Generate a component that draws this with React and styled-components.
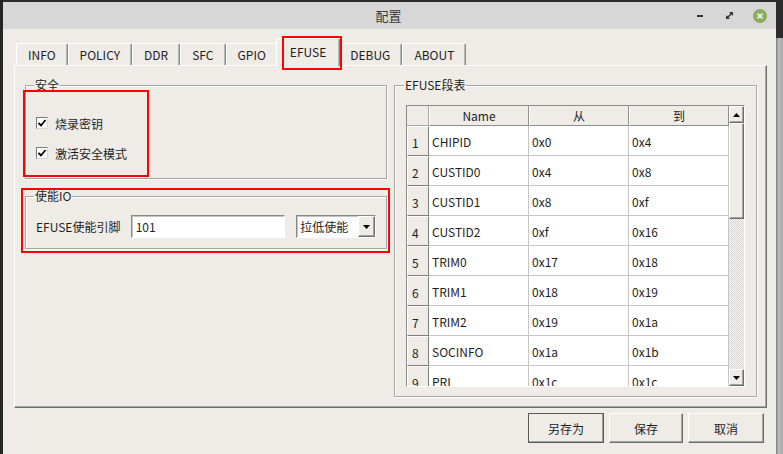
import React from 'react';
import styled, { createGlobalStyle, css } from 'styled-components';

const GlobalStyle = createGlobalStyle`
  html, body { margin: 0; padding: 0; background: #2c2c2c; overflow: hidden; }
  body { font-family: "Noto Sans CJK SC", "Noto Sans", sans-serif; font-size: 12px; color: #1e1e1e; }
  * { box-sizing: border-box; }
`;

const raised = css`
  border: 1px solid;
  border-color: #ffffff #6e6e6e #6e6e6e #ffffff;
  box-shadow: inset -1px -1px 0 #a3a3a3;
`;

const sunken = css`
  border: 1px solid;
  border-color: #8a8a8a #ffffff #ffffff #8a8a8a;
  box-shadow: inset 1px 1px 0 #c4c4c4;
`;

const Screen = styled.div`
  position: relative;
  width: 783px;
  height: 454px;
  display: flex;
  background: #2c2c2c;
`;

const LeftEdge = styled.div`
  width: 3px;
  background: #242424;
`;

const RightEdge = styled.div`
  flex: 1;
  background:
    linear-gradient(to bottom, #2c2c2c 0 38px, transparent 38px),
    linear-gradient(to right, #7d7d7d, #bdbdbd 40%, #a5a5a5);
`;

const Window = styled.div`
  width: 773px;
  margin-top: 2px;
  height: 452px;
  display: flex;
  flex-direction: column;
  background: #efece8;
`;

const TitleBar = styled.div`
  height: 27px;
  background: #d7d7d7;
  display: grid;
  grid-template-columns: 1fr auto 1fr;
  align-items: center;
`;

const Title = styled.div`
  grid-column: 2;
  font-size: 13px;
  color: #3a3a3a;
  padding-right: 2px;
`;

const Controls = styled.div`
  justify-self: end;
  display: flex;
  align-items: center;
  padding-right: 9px;
`;

const CtrlBtn = styled.div`
  width: ${p => p.$w}px;
  height: 14px;
  margin-left: ${p => p.$gap}px;
  display: flex;
  align-items: center;
  justify-content: center;
`;

const Body = styled.div`
  flex: 1;
  display: flex;
  flex-direction: column;
  padding: 0 9px 0 11px;
`;

const TabBar = styled.div`
  display: flex;
  align-items: flex-end;
  height: 27px;
  margin-top: 9px;
  padding-left: 2px;
  position: relative;
  z-index: 1;
`;

const Tab = styled.div`
  height: ${p => (p.$active ? 28 : 22)}px;
  padding: 0 ${p => (p.$active ? 13 : 11)}px;
  margin: 0 ${p => (p.$active ? -2 : 0)}px ${p => (p.$active ? -1 : 0)}px;
  display: flex;
  align-items: center;
  justify-content: center;
  background: #efece8;
  border-top: 1px solid #ffffff;
  border-left: 1px solid #ffffff;
  border-right: 1px solid #8a8a8a;
  border-top-left-radius: 2px;
  border-top-right-radius: 2px;
  box-shadow: inset -1px 0 0 #b8b8b8;
  font-size: 12px;
  color: #1e1e1e;
  position: relative;
  z-index: ${p => (p.$active ? 2 : 1)};
  padding-bottom: ${p => (p.$active ? 3 : 0)}px;
`;

const Pane = styled.div`
  border-top: 1px solid #ffffff;
  border-left: 1px solid #ffffff;
  border-right: 1px solid #6f6f6f;
  border-bottom: 1px solid #6f6f6f;
  box-shadow: inset -1px -1px 0 #a8a8a8;
  display: grid;
  grid-template-columns: 362px 363px;
  column-gap: 7px;
  align-items: start;
  padding: 11px 11px 9px 10px;
  height: 343px;
`;

const Column = styled.div`
  display: flex;
  flex-direction: column;
  gap: 9px;
`;

const Group = styled.fieldset`
  margin: 0;
  min-width: 0;
  border: 1px solid #a6a6a6;
  box-shadow: inset 1px 1px 0 #ffffff, 1px 1px 0 #ffffff;
  padding: ${p => p.$pad};
  display: flex;
  flex-direction: column;
  gap: ${p => p.$gap || 0}px;
`;

const Legend = styled.legend`
  padding: 0 1px;
  margin-left: -2px;
  font-size: 12px;
  line-height: 16px;
  color: #1e1e1e;
`;

const CheckRow = styled.label`
  display: flex;
  align-items: center;
  height: 20px;
  gap: 7px;
  font-size: 12px;
`;

const CheckBox = styled.span`
  width: 12px;
  height: 12px;
  background: #ffffff;
  border: 1px solid;
  border-color: #7a7a7a #d8d8d8 #d8d8d8 #7a7a7a;
  display: flex;
  align-items: center;
  justify-content: center;
`;

const FieldRow = styled.div`
  display: flex;
  align-items: center;
  height: 23px;
`;

const FieldLabel = styled.span`
  width: 95px;
  font-size: 12px;
`;

const TextInput = styled.div`
  ${sunken};
  width: 155px;
  height: 23px;
  background: #ffffff;
  display: flex;
  align-items: center;
  padding-left: 4px;
  font-size: 12px;
`;

const Combo = styled.div`
  ${sunken};
  width: 80px;
  height: 23px;
  margin-left: 11px;
  background: #fbfbfb;
  display: flex;
  align-items: stretch;
  font-size: 12px;
`;

const ComboText = styled.span`
  flex: 1;
  display: flex;
  align-items: center;
  padding-left: 3px;
`;

const ComboButton = styled.span`
  ${raised};
  width: 17px;
  background: #efece8;
  display: flex;
  align-items: center;
  justify-content: center;
`;

const Table = styled.div`
  ${sunken};
  width: 339px;
  height: 282px;
  display: flex;
  background: #ffffff;
`;

const GridArea = styled.div`
  width: 322px;
  height: 280px;
  overflow: hidden;
  display: grid;
  grid-template-columns: 22px 100px 100px 100px;
  grid-template-rows: 20px;
  grid-auto-rows: 30px;
  align-content: start;
`;

const Corner = styled.div`
  background: #efece8;
  border-right: 1px solid #a8a8a8;
  border-bottom: 1px solid #a8a8a8;
`;

const HeadCell = styled.div`
  background: #efece8;
  border-left: 1px solid #ffffff;
  border-right: 1px solid #8e8e8e;
  border-bottom: 1px solid #8e8e8e;
  display: flex;
  align-items: center;
  justify-content: center;
  font-size: 12px;
`;

const RowHead = styled.div`
  background: #efece8;
  border-top: 1px solid #ffffff;
  border-left: 1px solid #ffffff;
  border-right: 1px solid #7e7e7e;
  border-bottom: 1px solid #7e7e7e;
  display: flex;
  align-items: center;
  padding: 3px 0 0 4px;
  font-size: 12px;
`;

const Cell = styled.div`
  background: #ffffff;
  border-right: 1px solid #c6c6c6;
  border-bottom: 1px solid #c6c6c6;
  display: flex;
  align-items: center;
  padding: 1px 0 0 3px;
  font-size: 12px;
`;

const ScrollBar = styled.div`
  width: 15px;
  display: flex;
  flex-direction: column;
  background-color: #f4f2ef;
  background-image: repeating-conic-gradient(#d9d6d2 0 25%, #f7f6f4 0 50%);
  background-size: 2px 2px;
`;

const ScrollBtn = styled.div`
  ${raised};
  height: ${p => p.$h}px;
  background: #efece8;
  display: flex;
  align-items: center;
  justify-content: center;
  margin-top: ${p => (p.$bottom ? 'auto' : '0')};
`;

const Thumb = styled.div`
  ${raised};
  height: 96px;
  background: #efece8;
`;

const ButtonRow = styled.div`
  display: flex;
  justify-content: flex-end;
  gap: 5px;
  padding: 5px 3px 0 0;
`;

const Button = styled.div`
  ${raised};
  width: ${p => p.$w}px;
  height: 30px;
  background: #efece8;
  display: flex;
  align-items: center;
  justify-content: center;
  font-size: 12px;
  ${p => p.$default && css`
    border-color: #ffffff #3e3e3e #3e3e3e #ffffff;
    outline: 1px solid #5a5a5a;
    outline-offset: -1px;
  `}
`;

const Mark = styled.div`
  position: absolute;
  left: ${p => p.$x}px;
  top: ${p => p.$y}px;
  width: ${p => p.$w}px;
  height: ${p => p.$h}px;
  border: 2px solid #ff0000;
  pointer-events: none;
  z-index: 5;
`;

const Check = () => (
  <svg width="10" height="10" viewBox="0 0 10 10">
    <path d="M1.5 5 L4 7.5 L8.5 2" stroke="#000" strokeWidth="1.8" fill="none" />
  </svg>
);

const Down = () => (
  <svg width="7" height="4" viewBox="0 0 7 4"><path d="M0 0h7L3.5 4z" fill="#000" /></svg>
);
const Up = () => (
  <svg width="7" height="4" viewBox="0 0 7 4"><path d="M0 4h7L3.5 0z" fill="#000" /></svg>
);

const tabs = ['INFO', 'POLICY', 'DDR', 'SFC', 'GPIO', 'EFUSE', 'DEBUG', 'ABOUT'];

const rows = [
  ['CHIPID', '0x0', '0x4'],
  ['CUSTID0', '0x4', '0x8'],
  ['CUSTID1', '0x8', '0xf'],
  ['CUSTID2', '0xf', '0x16'],
  ['TRIM0', '0x17', '0x18'],
  ['TRIM1', '0x18', '0x19'],
  ['TRIM2', '0x19', '0x1a'],
  ['SOCINFO', '0x1a', '0x1b'],
  ['PRI', '0x1c', '0x1c'],
];

export default function App() {
  return (
    <>
      <GlobalStyle />
      <Screen>
        <LeftEdge />
        <Window>
          <TitleBar>
            <Title>配置</Title>
            <Controls>
              <CtrlBtn $w={7} $gap={0}>
                <svg width="6" height="2"><rect width="6" height="2" fill="#333" /></svg>
              </CtrlBtn>
              <CtrlBtn $w={7} $gap={23}>
                <svg width="7" height="7" viewBox="0 0 7 7">
                  <path d="M3 0h4v4z M0 3v4h4z" fill="#333" />
                  <path d="M1.5 5.5 L5.5 1.5" stroke="#333" strokeWidth="1.4" />
                </svg>
              </CtrlBtn>
              <CtrlBtn $w={14} $gap={20}>
                <svg width="14" height="14" viewBox="0 0 14 14">
                  <circle cx="7" cy="7" r="7" fill="#8aad62" />
                  <path d="M4.5 4.5 L9.5 9.5 M9.5 4.5 L4.5 9.5" stroke="#fff" strokeWidth="1.6" />
                </svg>
              </CtrlBtn>
            </Controls>
          </TitleBar>
          <Body>
            <TabBar>
              {tabs.map(t => (
                <Tab key={t} $active={t === 'EFUSE'}>{t}</Tab>
              ))}
            </TabBar>
            <Pane>
              <Column>
                <Group $pad="20px 10px 15px" $gap={10}>
                  <Legend>安全</Legend>
                  <CheckRow><CheckBox><Check /></CheckBox>烧录密钥</CheckRow>
                  <CheckRow><CheckBox><Check /></CheckBox>激活安全模式</CheckRow>
                </Group>
                <Group $pad="11px 10px 10px">
                  <Legend>使能IO</Legend>
                  <FieldRow>
                    <FieldLabel>EFUSE使能引脚</FieldLabel>
                    <TextInput>101</TextInput>
                    <Combo>
                      <ComboText>拉低使能</ComboText>
                      <ComboButton><Down /></ComboButton>
                    </Combo>
                  </FieldRow>
                </Group>
              </Column>
              <Group $pad="12px 10px 9px 11px">
                <Legend>EFUSE段表</Legend>
                <Table>
                  <GridArea>
                    <Corner />
                    <HeadCell>Name</HeadCell>
                    <HeadCell>从</HeadCell>
                    <HeadCell>到</HeadCell>
                    {rows.map((r, i) => (
                      <React.Fragment key={r[0]}>
                        <RowHead>{i + 1}</RowHead>
                        <Cell>{r[0]}</Cell>
                        <Cell>{r[1]}</Cell>
                        <Cell>{r[2]}</Cell>
                      </React.Fragment>
                    ))}
                  </GridArea>
                  <ScrollBar>
                    <ScrollBtn $h={17}><Up /></ScrollBtn>
                    <Thumb />
                    <ScrollBtn $h={17} $bottom><Down /></ScrollBtn>
                  </ScrollBar>
                </Table>
              </Group>
            </Pane>
            <ButtonRow>
              <Button $w={76} $default>另存为</Button>
              <Button $w={74}>保存</Button>
              <Button $w={76}>取消</Button>
            </ButtonRow>
          </Body>
        </Window>
        <RightEdge />
        <Mark $x={282} $y={36} $w={60} $h={34} />
        <Mark $x={23} $y={90} $w={126} $h={87} />
        <Mark $x={21} $y={188} $w={369} $h={65} />
      </Screen>
    </>
  );
}
